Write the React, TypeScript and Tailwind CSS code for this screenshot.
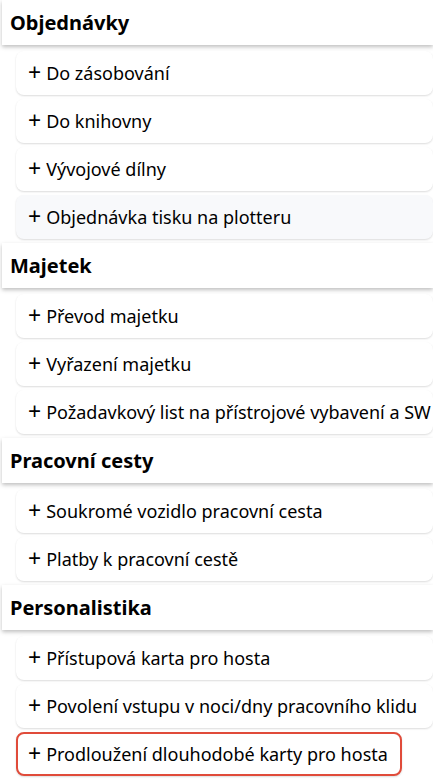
const SECTIONS = [
  {
    title: "Objednávky",
    items: ["Do zásobování", "Do knihovny", "Vývojové dílny", "Objednávka tisku na plotteru"],
  },
  {
    title: "Majetek",
    items: ["Převod majetku", "Vyřazení majetku", "Požadavkový list na přístrojové vybavení a SW"],
  },
  {
    title: "Pracovní cesty",
    items: ["Soukromé vozidlo pracovní cesta", "Platby k pracovní cestě"],
  },
  {
    title: "Personalistika",
    items: [
      "Přístupová karta pro hosta",
      "Povolení vstupu v noci/dny pracovního klidu",
      "Prodloužení dlouhodobé karty pro hosta",
    ],
  },
];

const HOVERED = "Objednávka tisku na plotteru";
const SELECTED = "Prodloužení dlouhodobé karty pro hosta";

export default function App() {
  return (
    <div
      className="w-[433px] h-[780px] overflow-hidden bg-white text-[#1b1b1b]"
      style={{ fontFamily: '"Noto Sans", "Open Sans", sans-serif' }}
    >
      {SECTIONS.map((section, si) => (
        <section key={section.title}>
          <div
            className={`h-[45px] ml-[2px] mb-[6px] flex items-center px-2 bg-white shadow-[0_2px_4px_rgba(0,0,0,0.25)] ${
              si > 0 ? "mt-[1px]" : ""
            }`}
          >
            <h2 className="text-[20px] font-bold text-black whitespace-nowrap">{section.title}</h2>
          </div>
          {section.items.map((item) => (
            <div
              key={item}
              className={`h-[44px] ml-4 mb-1 flex items-center px-3 rounded-lg whitespace-nowrap overflow-hidden text-[18px] text-black shadow-[0_1px_2px_rgba(0,0,0,0.14)] ${
                item === HOVERED ? "bg-[#f8f9fb]" : "bg-white"
              } ${item === SELECTED ? "w-[386px] border-2 border-[#e04b3a] px-[10px]" : ""}`}
            >
              <span className="mr-[5px] text-[23px] leading-none -mt-[2px]">+</span>
              <span>{item}</span>
            </div>
          ))}
        </section>
      ))}
    </div>
  );
}
